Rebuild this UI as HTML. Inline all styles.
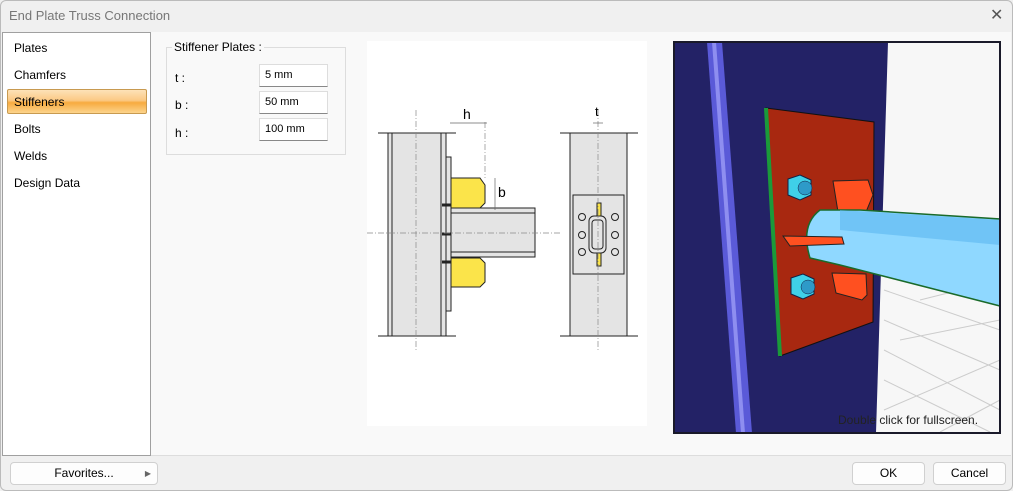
<!DOCTYPE html>
<html><head><style>
body{margin:0;width:1013px;height:491px;background:#f0f0f0;font-family:"Liberation Sans",sans-serif;font-size:12px;color:#000;position:relative;overflow:hidden}
.a{position:absolute}
.inp{position:absolute;left:259px;height:21px;background:#fff;border:1px solid #ddd;border-bottom:1px solid #888;box-sizing:content-box;font-size:11px;line-height:21px;padding-left:5px;width:62px}
.item{position:absolute;left:14px;font-size:12px}
.btn{position:absolute;top:462px;height:21px;background:#fdfdfd;border:1px solid #d0d0d0;border-radius:4px;font-size:12px;text-align:center;line-height:21px}
</style></head><body>
<div class="a" style="left:0;top:0;width:1011px;height:489px;border:1px solid #bbb;border-radius:6px"></div>
<div class="a" style="left:9px;top:8px;font-size:13px;color:#777">End Plate Truss Connection</div>
<div class="a" style="left:990px;top:5px;font-size:16px;color:#555">✕</div>
<div class="a" style="left:150px;top:32px;width:861px;height:423px;background:#f9f9f9;border-bottom:1px solid #ddd"></div>
<div class="a" style="left:2px;top:32px;width:147px;height:422px;background:#fff;border:1px solid #a0a0a0"></div>
<div class="a" style="left:7px;top:89px;width:138px;height:23px;border:1px solid #c89a50;border-radius:2px;background:linear-gradient(#fde2b8,#fbc985 45%,#f7ab3f 55%,#fcd48c)"></div>
<div class="item" style="top:41px">Plates</div>
<div class="item" style="top:68px">Chamfers</div>
<div class="item" style="top:95px">Stiffeners</div>
<div class="item" style="top:122px">Bolts</div>
<div class="item" style="top:149px">Welds</div>
<div class="item" style="top:176px">Design Data</div>
<div class="a" style="left:166px;top:47px;width:178px;height:106px;border:1px solid #ddd"></div>
<div class="a" style="left:172px;top:40px;background:#f9f9f9;padding:0 2px">Stiffener Plates :</div>
<div class="a" style="left:175px;top:71px">t :</div>
<div class="a" style="left:175px;top:98px">b :</div>
<div class="a" style="left:175px;top:126px">h :</div>
<div class="inp" style="top:64px">5 mm</div>
<div class="inp" style="top:91px">50 mm</div>
<div class="inp" style="top:118px">100 mm</div>
<svg class="a" style="left:367px;top:41px" width="280" height="385" viewBox="367 41 280 385">
<rect x="367" y="41" width="280" height="385" fill="#fff"/>
<g stroke="#222" stroke-width="1" fill="#e4e4e4">
<rect x="388" y="133" width="58" height="203"/>
<line x1="392" y1="133" x2="392" y2="336"/><line x1="441" y1="133" x2="441" y2="336"/>
<rect x="446" y="157" width="5" height="154"/>
<path d="M451 178H480L485 185V203L480 208H451Z" fill="#fbe44a"/>
<path d="M451 258H480L485 263V282L480 287H451Z" fill="#fbe44a"/>
<rect x="451" y="208" width="84" height="49"/>
<line x1="451" y1="213" x2="535" y2="213"/><line x1="451" y1="252" x2="535" y2="252"/>
<rect x="570" y="133" width="57" height="203"/>
<rect x="573" y="195" width="51" height="79"/>
<rect x="597" y="203" width="4" height="63" fill="#fbe44a"/>
<rect x="589" y="216" width="17" height="37" rx="5"/>
<rect x="592" y="220" width="11" height="29" rx="3"/>
</g>
<g stroke="#222" fill="none">
<line x1="378" y1="133" x2="456" y2="133"/><line x1="378" y1="336" x2="456" y2="336"/>
<line x1="560" y1="133" x2="638" y2="133"/><line x1="560" y1="336" x2="638" y2="336"/>
<g stroke-width="3"><line x1="442" y1="205" x2="451" y2="205"/><line x1="442" y1="234" x2="451" y2="234"/><line x1="442" y1="262" x2="451" y2="262"/></g>
<g fill="#e4e4e4"><circle cx="582" cy="217" r="3.5"/><circle cx="582" cy="235" r="3.5"/><circle cx="582" cy="252" r="3.5"/><circle cx="615" cy="217" r="3.5"/><circle cx="615" cy="235" r="3.5"/><circle cx="615" cy="252" r="3.5"/></g>
</g>
<g stroke="#888" stroke-width=".7" stroke-dasharray="6,2,1,2" fill="none">
<line x1="367" y1="233" x2="560" y2="233"/><line x1="416" y1="110" x2="416" y2="350"/><line x1="598" y1="110" x2="598" y2="350"/>
<line x1="485" y1="122" x2="485" y2="178"/>
</g>
<g stroke="#666" stroke-width=".7"><line x1="450" y1="123" x2="487" y2="123"/><line x1="495" y1="178" x2="495" y2="210"/><line x1="593" y1="123" x2="603" y2="123"/></g>
<text x="463" y="119" font-size="14" font-family="Liberation Sans">h</text>
<text x="498" y="197" font-size="14" font-family="Liberation Sans">b</text>
<text x="595" y="116" font-size="13" font-family="Liberation Sans">t</text>
</svg>
<svg class="a" style="left:673px;top:41px" width="328" height="393" viewBox="673 41 328 393">
<rect x="673" y="41" width="328" height="393" fill="#f7f7f7"/>
<g stroke="#ccc" fill="none">
<path d="M884 290L1000 330M884 320L1000 370M884 350L1000 410M884 380L990 432M920 300L1000 280M900 340L1000 320M884 410L1000 360M940 432L1000 400"/>
<path d="M675 330L700 320M675 390L700 380"/>
</g>
<path d="M674 42H888L876 433H674Z" fill="#232266"/>
<path d="M707 42H722L752 433H736Z" fill="#5a5ad8"/>
<path d="M712 42H716L745 433H741Z" fill="#8e8ef0"/>
<path d="M766 108L874 122L873 322L780 356Z" fill="#a82810" stroke="#111"/>
<path d="M764 108L768 108L782 356L778 356Z" fill="#1a9a3a"/>
<path d="M788 179L800 175L811 180L811 195L800 200L788 195Z" fill="#3fd0e8" stroke="#124"/><circle cx="805" cy="188" r="7" fill="#2e9ac8" stroke="#124" stroke-width=".5"/>
<path d="M791 278L803 274L814 279L814 294L803 299L791 294Z" fill="#3fd0e8" stroke="#124"/><circle cx="808" cy="287" r="7" fill="#2e9ac8" stroke="#124" stroke-width=".5"/>
<path d="M833 181L868 180L873 195L866 212L838 212Z" fill="#ff5020" stroke="#222"/>
<path d="M832 273L866 274L867 295L862 300L836 293Z" fill="#ff5020" stroke="#222"/>
<path d="M820 210Q800 225 810 258L840 265L1000 306V219L860 210Z" fill="#8fd8ff" stroke="#1a6a2a" stroke-width="1.5"/>
<path d="M840 210L1000 220V245L840 230Z" fill="#5cb8f0" opacity=".6"/>
<path d="M783 236L842 237L844 244L790 246Z" fill="#ff5020" stroke="#222"/>
<text x="838" y="424" font-size="12" fill="#222" font-family="Liberation Sans">Double click for fullscreen.</text>
<rect x="674" y="42" width="326" height="391" fill="none" stroke="#1a1a2a" stroke-width="2"/>
</svg>
<div class="btn" style="left:10px;width:146px">Favorites...<span style="position:absolute;right:6px;font-size:8px;color:#666">▶</span></div>
<div class="btn" style="left:852px;width:71px">OK</div>
<div class="btn" style="left:933px;width:71px">Cancel</div>
</body></html>
